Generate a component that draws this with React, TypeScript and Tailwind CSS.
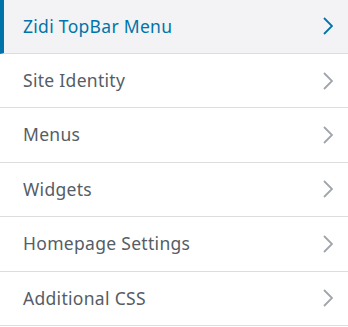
const items = [
  'Zidi TopBar Menu',
  'Site Identity',
  'Menus',
  'Widgets',
  'Homepage Settings',
  'Additional CSS',
];

function Chevron({ active }: { active: boolean }) {
  return (
    <svg width="10" height="18" viewBox="0 0 10 18" fill="none" className="shrink-0">
      <path
        d="M1 1 L9 9 L1 17"
        stroke={active ? '#0073aa' : '#a0a5aa'}
        strokeWidth="1.8"
        strokeLinejoin="miter"
      />
    </svg>
  );
}

export default function App() {
  return (
    <div className="w-[348px] h-[327px] overflow-hidden bg-white font-['Noto_Sans',sans-serif]">
      <div className="-mt-[0.4px]">
        {items.map((label, i) => {
          const active = i === 0;
          return (
            <div
              key={label}
              className={
                active
                  ? 'h-[54.4px] flex items-center justify-between border-b border-[#dddddd] border-l-4 border-l-[#0073aa] bg-[#f3f3f5] pl-[19px] pr-[15px]'
                  : 'h-[54.4px] flex items-center justify-between border-b border-[#dddddd] bg-white pl-[23px] pr-[15px]'
              }
            >
              <span
                className={
                  active
                    ? 'text-[17.5px] tracking-[0.3px] leading-none text-[#0073aa]'
                    : 'text-[17.5px] tracking-[0.3px] leading-none text-[#555d66]'
                }
              >
                {label}
              </span>
              <Chevron active={active} />
            </div>
          );
        })}
      </div>
    </div>
  );
}
